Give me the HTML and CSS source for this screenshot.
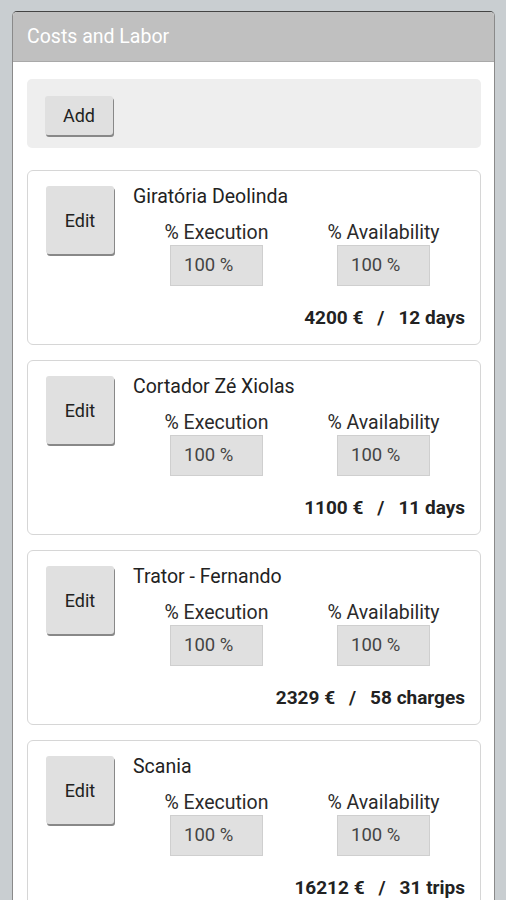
FILE: index.html
```html
<!DOCTYPE html>
<html lang="en">
  <head>
    <meta charset="UTF-8" />
    <meta name="viewport" content="width=device-width, initial-scale=1.0" />
    <title>Costs and Labor</title>
    <link rel="stylesheet" href="styles.css">
  </head>
  <body>
    <div class="panel">
      <div class="panel-head">Costs and Labor</div>
      <div class="panel-body">
        <div class="add-bar">
          <button class="btn add-btn">Add</button>
        </div>

        <div class="card">
          <button class="btn edit-btn">Edit</button>
          <div class="card-main">
            <div class="card-title">Giratória Deolinda</div>
            <div class="fields">
              <div class="field">
                <div class="field-label">% Execution</div>
                <div class="field-box">100 %</div>
              </div>
              <div class="field">
                <div class="field-label">% Availability</div>
                <div class="field-box">100 %</div>
              </div>
            </div>
            <div class="total"><span>4200 €</span><span class="sep">/</span><span>12 days</span></div>
          </div>
        </div>

        <div class="card">
          <button class="btn edit-btn">Edit</button>
          <div class="card-main">
            <div class="card-title">Cortador Zé Xiolas</div>
            <div class="fields">
              <div class="field">
                <div class="field-label">% Execution</div>
                <div class="field-box">100 %</div>
              </div>
              <div class="field">
                <div class="field-label">% Availability</div>
                <div class="field-box">100 %</div>
              </div>
            </div>
            <div class="total"><span>1100 €</span><span class="sep">/</span><span>11 days</span></div>
          </div>
        </div>

        <div class="card">
          <button class="btn edit-btn">Edit</button>
          <div class="card-main">
            <div class="card-title">Trator - Fernando</div>
            <div class="fields">
              <div class="field">
                <div class="field-label">% Execution</div>
                <div class="field-box">100 %</div>
              </div>
              <div class="field">
                <div class="field-label">% Availability</div>
                <div class="field-box">100 %</div>
              </div>
            </div>
            <div class="total"><span>2329 €</span><span class="sep">/</span><span>58 charges</span></div>
          </div>
        </div>

        <div class="card">
          <button class="btn edit-btn">Edit</button>
          <div class="card-main">
            <div class="card-title">Scania</div>
            <div class="fields">
              <div class="field">
                <div class="field-label">% Execution</div>
                <div class="field-box">100 %</div>
              </div>
              <div class="field">
                <div class="field-label">% Availability</div>
                <div class="field-box">100 %</div>
              </div>
            </div>
            <div class="total"><span>16212 €</span><span class="sep">/</span><span>31 trips</span></div>
          </div>
        </div>
      </div>
    </div>
  </body>
</html>
```

FILE: styles.css
```css
body {
  margin: 0;
  padding: 11px 11px 0 12px;
  background-color: #c9ced1;
  font-family: Roboto, "Liberation Sans", Arial, sans-serif;
  color: #222;
  height: 889px;
  overflow: hidden;
}
.panel {
  background-color: white;
  border: 1px solid #8a8a8a;
  border-top-color: #444;
  border-radius: 5px 5px 0 0;
  overflow: hidden;
  min-height: 900px;
}
.panel-head {
  height: 49px;
  line-height: 49px;
  background-color: #c0c0c0;
  border-bottom: 1px solid #a9a9a9;
  color: white;
  font-size: 19.5px;
  padding-left: 14px;
}
.panel-body {
  padding: 17px 13px 0 14px;
  display: flex;
  flex-direction: column;
  gap: 15px;
}
.add-bar {
  background-color: #eeeeee;
  border-radius: 5px;
  height: 69px;
  padding: 17px 18px 0;
  box-sizing: border-box;
  margin-bottom: 7px;
}
.btn {
  background-color: #e0e0e0;
  border: none;
  border-radius: 3px;
  box-shadow: 1px 2px 0 #888;
  font-family: inherit;
  font-size: 18px;
  color: #222;
  padding: 0;
}
.add-btn {
  width: 68px;
  height: 39px;
}
.card {
  border: 1px solid #d6d6d6;
  border-radius: 6px;
  height: 175px;
  box-sizing: border-box;
  padding: 15px 13px 0 18px;
  display: flex;
  gap: 19px;
}
.edit-btn {
  width: 68px;
  height: 68px;
  flex-shrink: 0;
}
.card-main {
  flex: 1;
}
.card-title {
  font-size: 19.5px;
  line-height: 23px;
  margin-top: -1px;
}
.fields {
  display: grid;
  grid-template-columns: 1fr 1fr;
  margin-top: 13px;
}
.field {
  display: flex;
  flex-direction: column;
  align-items: center;
}
.field-label {
  font-size: 19.5px;
  line-height: 23px;
  color: #2a2a2a;
}
.field-box {
  width: 93px;
  height: 41px;
  box-sizing: border-box;
  margin-top: 1px;
  background-color: #e0e0e0;
  border: 1px solid #cfcfcf;
  font-size: 18.5px;
  color: #444;
  line-height: 38px;
  padding-left: 13px;
}
.total {
  text-align: right;
  font-weight: bold;
  font-size: 19px;
  line-height: 22px;
  margin-top: 21px;
  margin-right: 2px;
}
.sep {
  margin: 0 14px;
}
```
